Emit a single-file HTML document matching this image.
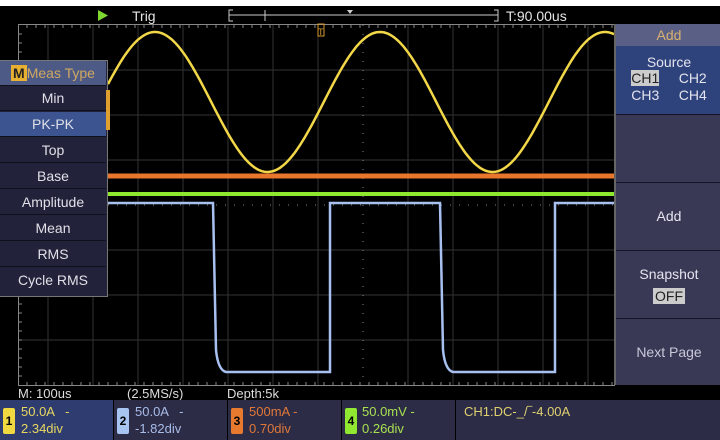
<!DOCTYPE html>
<html><head><meta charset="utf-8"><style>
*{margin:0;padding:0;box-sizing:border-box}
body{width:720px;height:440px;background:#000;position:relative;overflow:hidden;font-family:"Liberation Sans",sans-serif;color:#ddd}
.a{position:absolute}
.menu div{position:absolute;left:0;width:106px;height:25px;line-height:25px;text-align:center;font-size:14px;color:#e0e0e8;background:#22223a;border-bottom:1px solid #10101a}
.rp div{position:absolute;left:0;width:106px;text-align:center;font-size:14px;color:#e4e4ee}
.ch{position:absolute;top:400px;height:40px;font-size:13px;line-height:17px;padding-top:3px}
.num{position:absolute;left:3px;top:8px;width:12px;height:26px;border-radius:2px;color:#000;font-weight:bold;font-size:12px;text-align:center;line-height:26px}
</style></head><body>
<div class="a" style="left:0;top:0;width:720px;height:6px;background:#fff"></div>
<svg class="a" style="left:0;top:0" width="720" height="440">
<polygon points="98,10 98,21 108,15.5" fill="#7dd830"/>
<text x="132" y="21" fill="#e6e6e6" font-size="14" font-family="Liberation Sans">Trig</text>
<path d="M233,10 H229 V21 H233 M229,15 H265 M265,10 V21 M265,15 H498 M494,10 H498 V21 H494" stroke="#ccc" fill="none"/>
<polygon points="347,10 353,10 350,14" fill="#ccc"/>
<text x="506" y="21" fill="#e6e6e6" font-size="14" font-family="Liberation Sans">T:90.00us</text>
<g stroke="#333" stroke-width="1">
<path d="M48,25V385M93,25V385M138,25V385M183,25V385M228,25V385M273,25V385M318,25V385M408,25V385M453,25V385M498,25V385M543,25V385M588,25V385"/>
<path d="M18,70H614M18,115H614M18,160H614M18,250H614M18,295H614M18,340H614"/>
</g>
<path d="M363,25V385M18,205H614" stroke="#888" stroke-dasharray="1,8"/>
<path id="tk" d="" stroke="#888" stroke-width="1"/>
<rect x="18.5" y="24.5" width="596" height="361" fill="none" stroke="#888"/>
<path d="M318,24V36H324V24Z" fill="none" stroke="#d89a30"/>
<text x="318" y="35" fill="#d89a30" font-size="9">T</text>
<path d="M108,203H213L216,350Q218,370 226,372H330V203H440L443,350Q445,370 453,372H555V203H614" stroke="#a8c0f0" stroke-width="2.5" fill="none"/>
<path d="M108,176H614" stroke="#e8762c" stroke-width="5"/>
<path d="M108,194H614" stroke="#8ee830" stroke-width="4"/>
<path id="sn" d="" stroke="#f2d848" stroke-width="2.5" fill="none"/>
</svg>
<script>
var d="";for(var x=108;x<=614;x+=2){var y=102-70*Math.cos((x-155)/225*2*Math.PI);d+=(x==108?"M":"L")+x+","+y.toFixed(1);}document.getElementById("sn").setAttribute("d",d);
var t="";for(var x=27;x<614;x+=9){t+="M"+x+",25v3M"+x+",385v-3";}for(var y=34;y<385;y+=9){t+="M19,"+y+"h3";}document.getElementById("tk").setAttribute("d",t);
</script>
<div class="menu a" style="left:0;top:60px;width:108px;height:237px;background:#22223a;border:1px solid #777;border-left:none">
<div style="top:0;height:25px;background:#4e5a86;color:#d0a860;font-size:14px"><span style="background:#e8b030;color:#222;padding:0 2px;font-weight:bold">M</span>Meas Type</div>
<div style="top:25px">Min</div>
<div style="top:51px;background:#3c5590">PK-PK</div>
<div style="top:77px">Top</div>
<div style="top:103px">Base</div>
<div style="top:129px">Amplitude</div>
<div style="top:155px">Mean</div>
<div style="top:181px">RMS</div>
<div style="top:207px;border:none">Cycle RMS</div>
</div>
<div class="a" style="left:106px;top:90px;width:4px;height:40px;background:#e0a030"></div>
<div class="rp a" style="left:614px;top:24px;width:106px;height:361px;background:#393956;border-left:2px solid #666">
<div style="top:0;height:22px;line-height:22px;background:#5a5f86;color:#d8b070">Add</div>
<div style="top:22px;height:68px;background:#2e427c"><div style="position:static;width:auto;margin-top:8px">Source</div>
<div style="position:static;width:auto;font-size:14px;line-height:17px"><span style="background:#ccc;color:#222">CH1</span>&nbsp;&nbsp;&nbsp;&nbsp;&nbsp;CH2<br>CH3&nbsp;&nbsp;&nbsp;&nbsp;&nbsp;CH4</div></div>
<div style="top:158px;height:1px;background:#151525"></div>
<div style="top:90px;height:1px;background:#151525"></div>
<div style="top:182px;line-height:20px">Add</div>
<div style="top:226px;height:1px;background:#151525"></div>
<div style="top:240px;line-height:20px">Snapshot</div>
<div style="top:263px;line-height:18px"><span style="background:#ccc;color:#222;padding:0 2px">OFF</span></div>
<div style="top:294px;height:1px;background:#151525"></div>
<div style="top:318px;line-height:20px;color:#c8c8d8">Next Page</div>
</div>
<div class="a" style="left:18px;top:386px;font-size:13px;color:#ddd">M: 100us</div>
<div class="a" style="left:127px;top:386px;font-size:13px;color:#ddd">(2.5MS/s)</div>
<div class="a" style="left:227px;top:386px;font-size:13px;color:#ddd">Depth:5k</div>
<div class="ch" style="left:0;width:113px;background:#2e3c70;color:#e8d860;padding-left:21px"><span class="num" style="background:#f0d840">1</span>50.0A &nbsp;&nbsp;-<br>2.34div</div>
<div class="ch" style="left:114px;width:113px;background:#2c2c46;color:#a8bce8;padding-left:21px"><span class="num" style="background:#a8c4f0">2</span>50.0A &nbsp;&nbsp;-<br>-1.82div</div>
<div class="ch" style="left:228px;width:113px;background:#2c2c46;color:#e07838;padding-left:21px"><span class="num" style="background:#e87a30">3</span>500mA -<br>0.70div</div>
<div class="ch" style="left:342px;width:113px;background:#2c2c46;color:#a8e050;padding-left:20px"><span class="num" style="background:#90e830">4</span>50.0mV -<br>0.26div</div>
<div class="ch" style="left:456px;width:264px;background:#2c2c46;color:#e0d070;padding-left:8px">CH1:DC-_/‾-4.00A</div>
</body></html>
